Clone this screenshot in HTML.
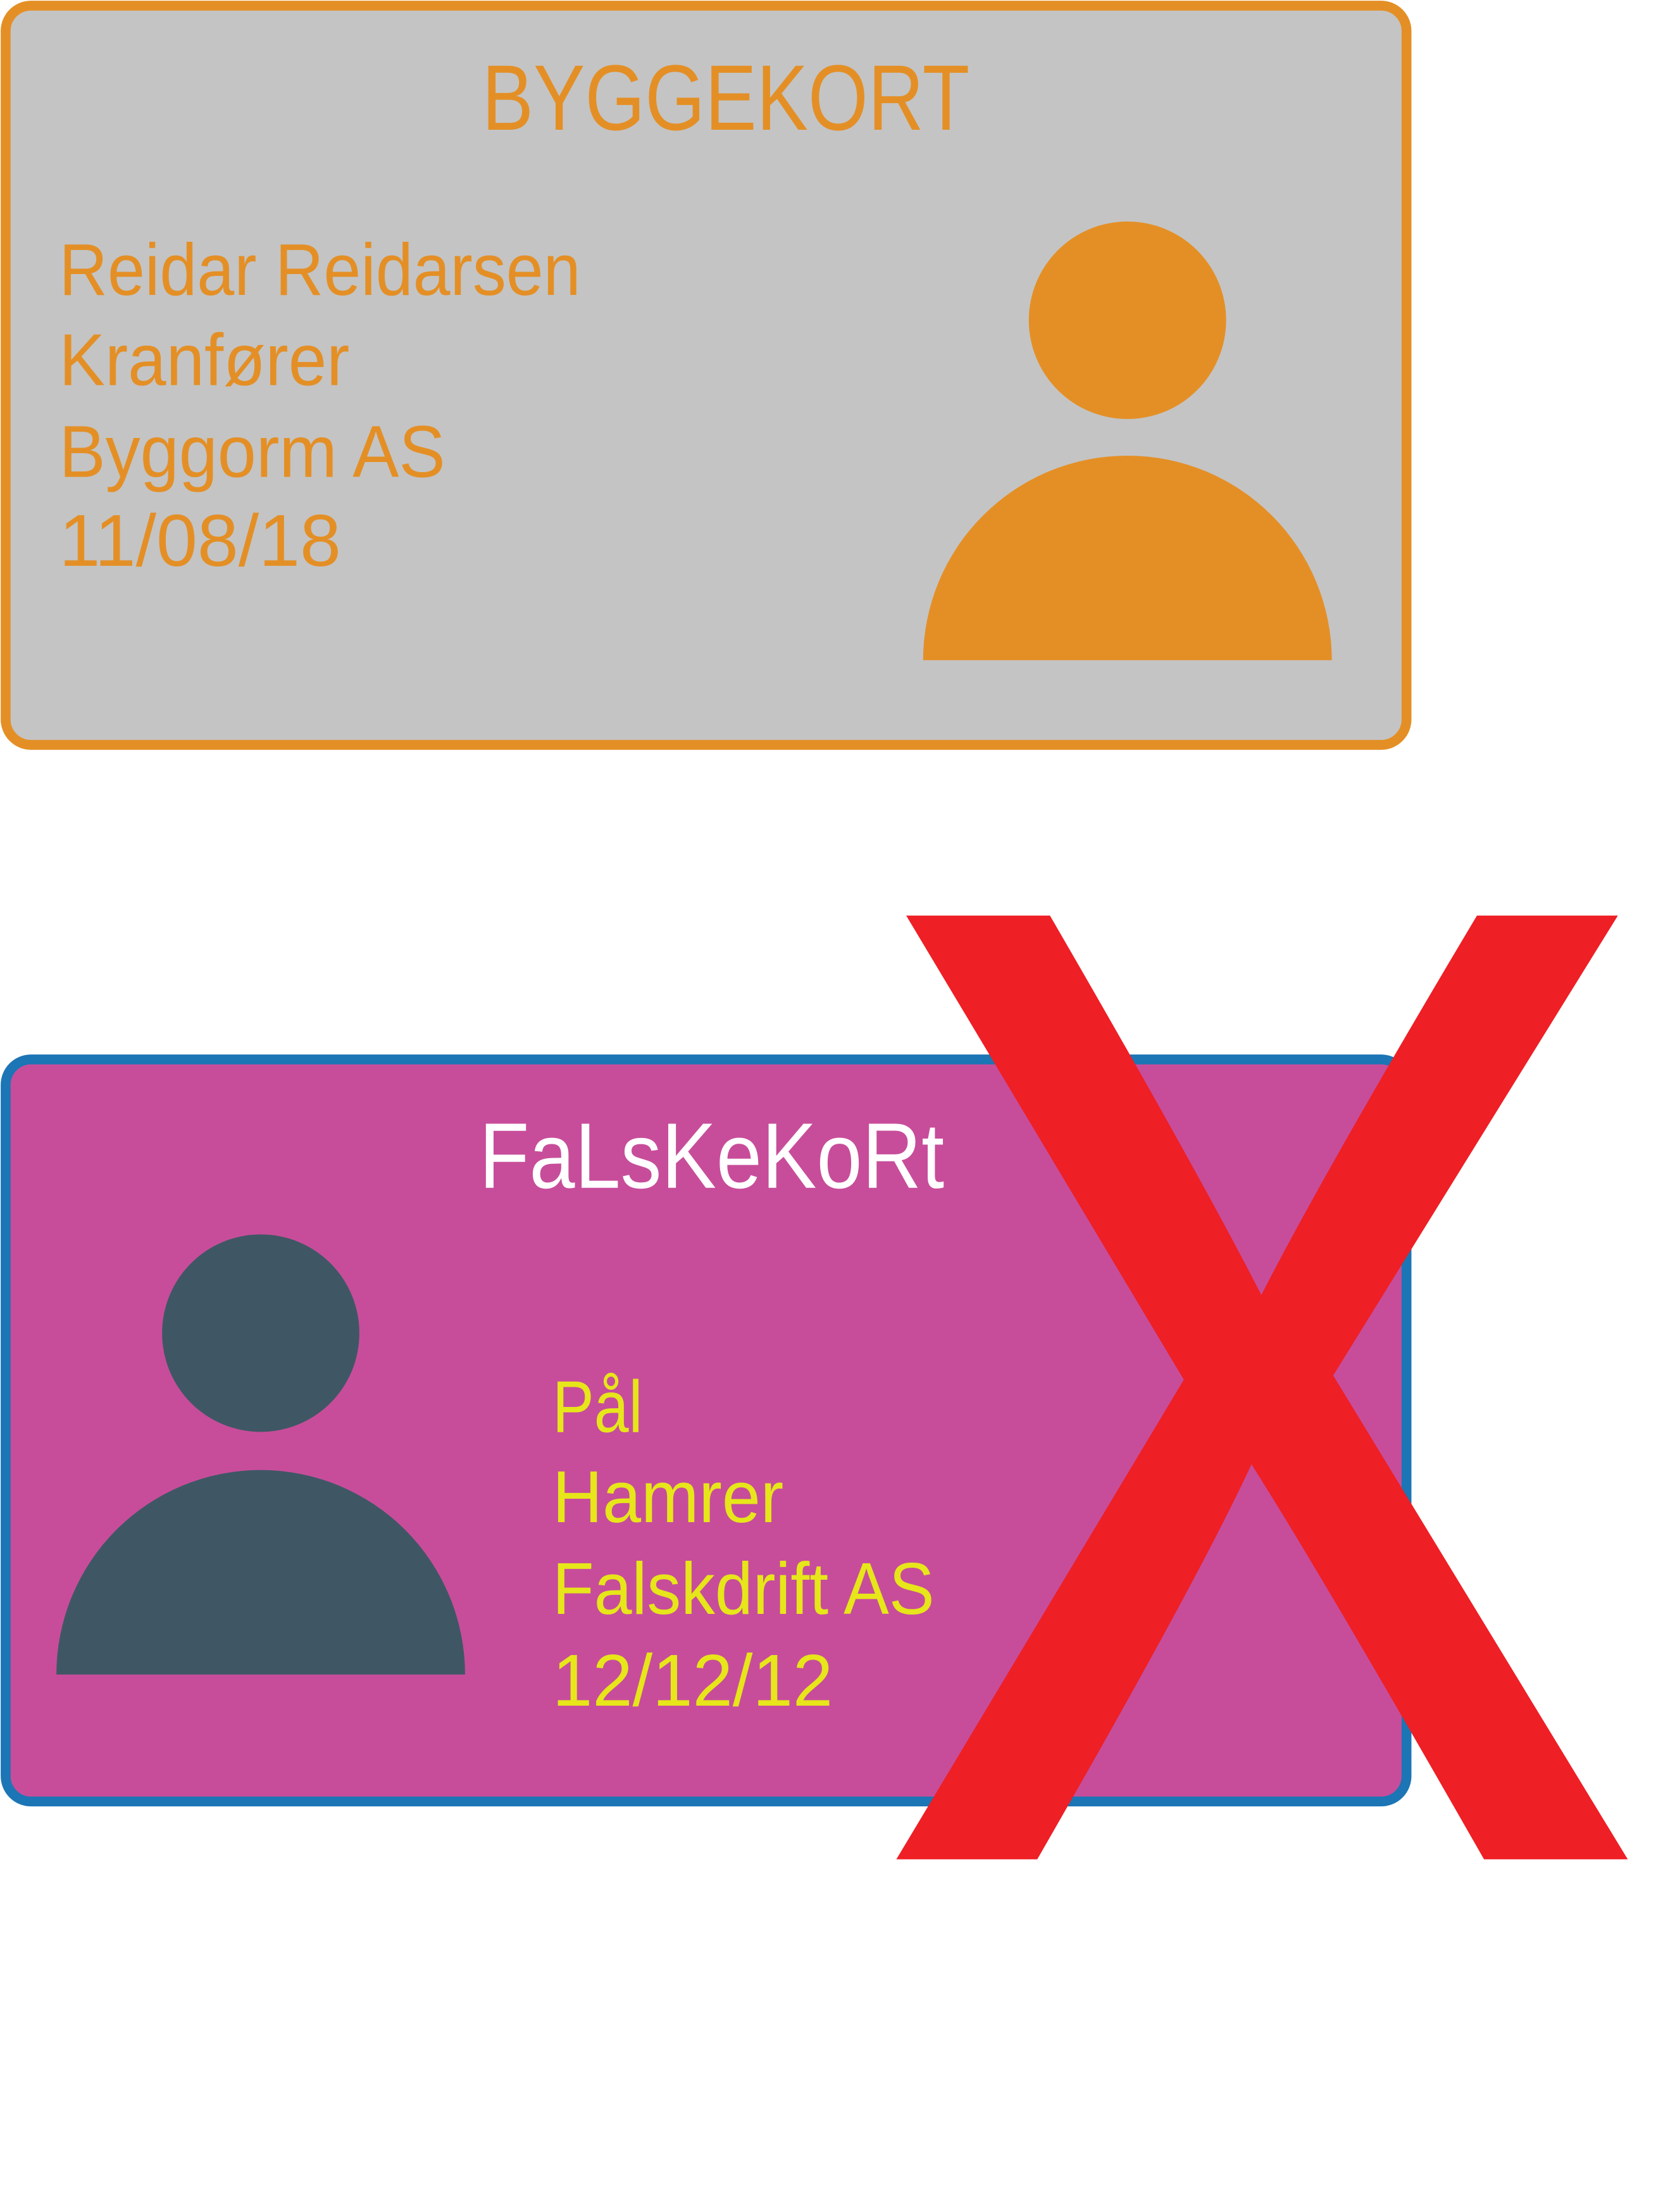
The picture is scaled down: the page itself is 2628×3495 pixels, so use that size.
<!DOCTYPE html>
<html><head><meta charset="utf-8"><style>
html,body{margin:0;padding:0;background:#fff;}
svg{display:block;}
text{font-family:"Liberation Sans","DejaVu Sans",sans-serif;}
</style></head><body>
<svg width="2628" height="3495" viewBox="0 0 1180 1568" preserveAspectRatio="none" xmlns="http://www.w3.org/2000/svg">
<rect x="0" y="0" width="1180" height="1568" fill="#fff"/>
<rect x="4" y="4" width="994" height="524" rx="18" fill="#C4C4C4" stroke="#E48F25" stroke-width="7"/>
<text x="342" y="92" font-size="66" fill="#E48F25" textLength="346" lengthAdjust="spacingAndGlyphs">BYGGEKORT</text>
<g fill="#E48F25" font-size="52">
<text x="42" y="209" textLength="370" lengthAdjust="spacingAndGlyphs">Reidar Reidarsen</text>
<text x="42" y="273" textLength="206" lengthAdjust="spacingAndGlyphs">Kranfører</text>
<text x="42" y="338" textLength="274" lengthAdjust="spacingAndGlyphs">Byggorm AS</text>
<text x="42" y="401" textLength="200" lengthAdjust="spacingAndGlyphs">11/08/18</text>
</g>
<circle cx="800" cy="227" r="70" fill="#E48F25"/>
<path d="M655 468 A145 145 0 0 1 945 468 Z" fill="#E48F25"/>

<rect x="4" y="751" width="994" height="526" rx="18" fill="#C74D9A" stroke="#1C75B5" stroke-width="7"/>
<text x="340" y="842" font-size="66" fill="#fff" textLength="330" lengthAdjust="spacingAndGlyphs">FaLsKeKoRt</text>
<g fill="#E6E61A" font-size="52">
<text x="392" y="1015" textLength="64" lengthAdjust="spacingAndGlyphs">Pål</text>
<text x="392" y="1079" textLength="164" lengthAdjust="spacingAndGlyphs">Hamrer</text>
<text x="392" y="1144" textLength="271" lengthAdjust="spacingAndGlyphs">Falskdrift AS</text>
<text x="392" y="1209" textLength="199" lengthAdjust="spacingAndGlyphs">12/12/12</text>
</g>
<circle cx="185" cy="945" r="70" fill="#3F5764"/>
<path d="M40 1187 A145 145 0 0 1 330 1187 Z" fill="#3F5764"/>

<g fill="#EE1F25">
<path d="M643 649 L745 649 Q850 830 895 918 Q940 830 1048 649 L1148 649 L946 975 L1155 1318 L1053 1318 Q940 1120 888 1038 Q850 1120 736 1318 L636 1318 L840 978 Z"/>
</g>
</svg>
</body></html>
